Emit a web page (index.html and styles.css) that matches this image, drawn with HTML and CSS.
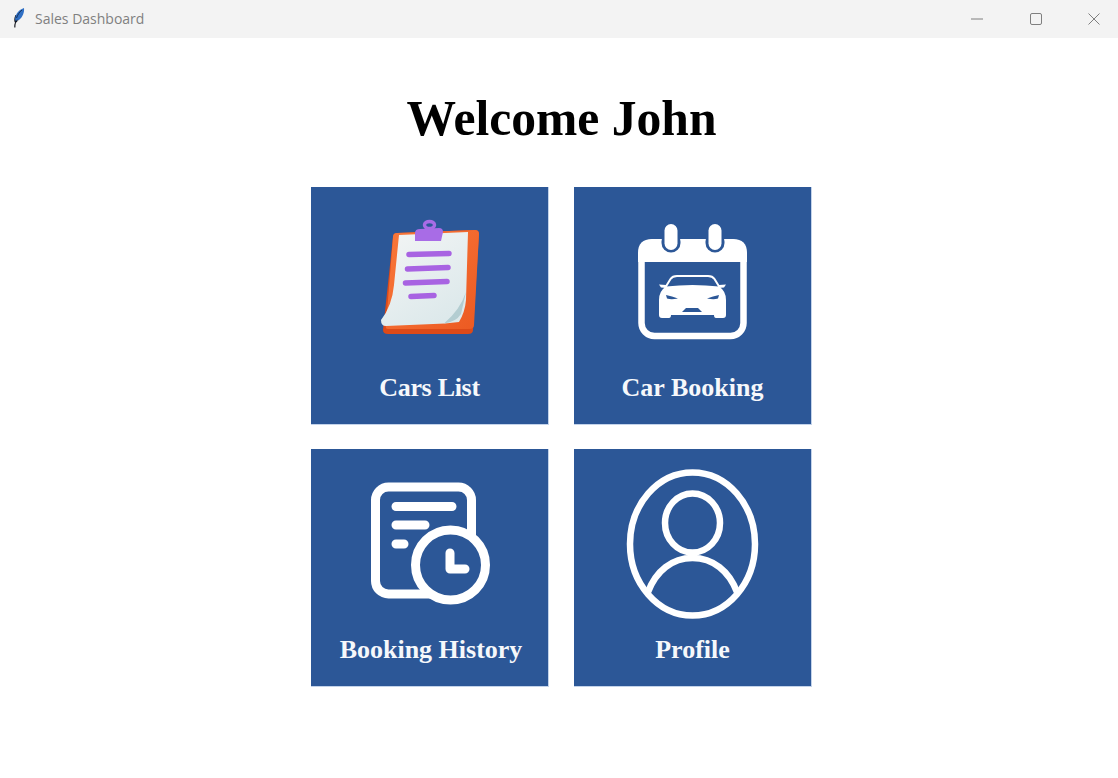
FILE: index.html
```html
<!DOCTYPE html>
<html lang="en">
<head>
<meta charset="utf-8">
<title>Sales Dashboard</title>
<link rel="stylesheet" href="styles.css">
</head>
<body>
<header class="titlebar">
  <div class="titlebar-left">
    <svg class="feather" viewBox="10 7 16 24" width="16" height="24">
      <path class="feather-black" d="M14.300 27.500 C14.200 25.500 14.400 24 15 22.500 C14 21.500 14 18 15.500 15 L20 15 L17 22 L16 22.500 C15.500 24 15.300 25.800 15.400 27.500 Z"/>
      <path class="feather-blue" d="M15.200 20 C14.800 15.500 18 10 24 8 C24.500 12 23 17 18.500 20.500 L17 19.500 L16 21.500 Z"/>
      <path class="feather-shine" d="M16.500 18 C17.500 15 19.500 12 22 10"/>
    </svg>
    <span class="window-title">Sales Dashboard</span>
  </div>
  <div class="window-controls">
    <svg class="ctrl" viewBox="0 0 12 12" width="12" height="12"><path d="M0 6H12"/></svg>
    <svg class="ctrl" viewBox="0 0 12 12" width="12" height="12"><rect x="0.500" y="0.500" width="11" height="11" rx="1.500"/></svg>
    <svg class="ctrl" viewBox="0 0 12 12" width="12" height="12"><path d="M0.500 0.500L11.500 11.500M11.500 0.500L0.500 11.500"/></svg>
  </div>
</header>
<main class="content">
  <h1 class="welcome">Welcome John</h1>
  <section class="tiles">
    <a class="tile">
      <svg class="tile-icon" viewBox="311 187 238 170">
        <defs>
          <linearGradient id="board" x1="0" y1="0" x2="1" y2="1">
            <stop offset="0" stop-color="#f9783a"/>
            <stop offset="1" stop-color="#ec5a22"/>
          </linearGradient>
          <linearGradient id="paper" x1="0" y1="0" x2="0.600" y2="1">
            <stop offset="0" stop-color="#f3f5f5"/>
            <stop offset="1" stop-color="#dde9eb"/>
          </linearGradient>
        </defs>
        <path d="M393 237 Q393 233 397 233 L475 230 Q479 230 479 234 L473 330 Q473 334 468 334 L388 334 Q383 334 383 330 Z" fill="#dd4a18"/>
        <path d="M393 237 Q393 233 397 233 L475 230 Q479 230 479 234 L474 325 Q474 329 469 329 L388 329 Q385 329 386 325 Z" fill="url(#board)"/>
        <path d="M399 235 L468 232 L466 300 Q465 312 459 322 L445 323.500 L386 326 Q381 326 381 320 Q392 306 394 285 Z" fill="url(#paper)"/>
        <path d="M466 292 Q460 310 444 323.500 Q456 322 461 314 Z" fill="#b3cdd1"/>
        <path d="M409 254.500L449 253.500M407.500 269L448 267.500M405.500 283L447 281.500M411 296.500L434 295.500" stroke="#a863e2" stroke-width="5.500" stroke-linecap="round" fill="none"/>
        <ellipse cx="429.500" cy="225" rx="5" ry="3.500" fill="none" stroke="#a86ce6" stroke-width="3.500"/>
        <path d="M415 233 Q415 229 420 229 L439 228 Q443 228 443 232 L441 241 L415 241 Z" fill="#a86ce6"/>
      </svg>
      <span class="tile-label label-tight">Cars List</span>
    </a>
    <a class="tile">
      <svg class="tile-icon" viewBox="574 187 238 170">
        <rect class="w-stroke" x="641.500" y="242.500" width="102" height="93.500" rx="13"/>
        <path d="M638 262 V253 Q638 239 652 239 H733 Q747 239 747 253 V262 Z" fill="#fff"/>
        <rect x="661.500" y="232" width="19" height="20.500" rx="9.500" fill="#2c5797"/>
        <rect x="705.500" y="232" width="19" height="20.500" rx="9.500" fill="#2c5797"/>
        <rect x="664.500" y="224" width="13" height="26" rx="6.500" fill="#fff"/>
        <rect x="708.500" y="224" width="13" height="26" rx="6.500" fill="#fff"/>
        <path d="M665 288 L670.500 279 Q672.500 276 677 276 H708 Q712.500 276 714.500 279 L720 288" fill="none" stroke="#fff" stroke-width="2"/>
        <path d="M659 284.500 L666 285 L667 288 L661 287.500 Z M726 284.500 L719 285 L718 288 L724 287.500 Z" fill="#fff"/>
        <path d="M666 286.500 Q692.500 283.500 719 286.500 Q726 291 726 300 V315 Q726 318 723 318 H716 Q714 318 714 315 H671 Q671 318 669 318 H662 Q659 318 659 315 V300 Q659 291 666 286.500 Z" fill="#fff"/>
        <path d="M666 295 Q672 296 678 298.500 Q671 300 667 298.500 Z M719 295 Q713 296 707 298.500 Q714 300 718 298.500 Z M682 312 L686 308 H698 L702 312 Z" fill="#2c5797"/>
      </svg>
      <span class="tile-label">Car Booking</span>
    </a>
    <a class="tile">
      <svg class="tile-icon" viewBox="311 449 238 170">
        <rect class="w-stroke thick" x="375.500" y="487" width="96" height="107" rx="13"/>
        <path d="M396 506.500H452M396 525H425M396 544H404" class="w-line"/>
        <circle cx="450.500" cy="565" r="35" fill="#2c5797" stroke="#fff" stroke-width="9"/>
        <path d="M450 553V569H465" class="w-line"/>
      </svg>
      <span class="tile-label label-shift">Booking History</span>
    </a>
    <a class="tile">
      <svg class="tile-icon" viewBox="574 449 238 170">
        <ellipse class="w-stroke" cx="692.500" cy="544" rx="62.500" ry="71.500"/>
        <ellipse class="w-stroke" cx="692.500" cy="523" rx="27.500" ry="29.500"/>
        <path class="w-stroke" d="M648 592 C656 571 672 558 692.500 558 C713 558 729 571 737 592"/>
      </svg>
      <span class="tile-label">Profile</span>
    </a>
  </section>
</main>
</body>
</html>
```
FILE: styles.css
```css
* {
  box-sizing: border-box;
}

html,
body {
  margin: 0;
  height: 100%;
  background: #fff;
}

body {
  display: flex;
  flex-direction: column;
  overflow: hidden;
}

.titlebar {
  height: 38px;
  flex: none;
  display: flex;
  justify-content: space-between;
  align-items: center;
  background: #f3f3f3;
}

.titlebar-left {
  display: flex;
  align-items: center;
  padding-left: 10px;
}

.feather {
  display: block;
}

.feather-black {
  fill: #10131a;
}

.feather-blue {
  fill: #2f6fc4;
}

.feather-shine {
  fill: none;
  stroke: #10233f;
  stroke-width: 0.800;
}

.window-title {
  margin: 0 0 2px 9px;
  font: 14px "Open Sans", sans-serif;
  color: #808080;
}

.window-controls {
  display: flex;
  gap: 46.500px;
  padding-right: 18px;
}

.ctrl {
  display: block;
  fill: none;
  stroke: #7f7f7f;
  stroke-width: 1;
}

.content {
  flex: 1;
  display: flex;
  flex-direction: column;
  align-items: center;
  padding-left: 5px;
}

.welcome {
  margin: 49px 0 37px;
  font: bold 49.600px/63px "Liberation Serif", serif;
  color: #000;
}

.tiles {
  display: grid;
  grid-template-columns: 238px 238px;
  grid-auto-rows: 238px;
  gap: 24px 25px;
}

.tile {
  display: flex;
  flex-direction: column;
  align-items: center;
  background: #2c5797;
  color: #f6f8fb;
  border-right: 1px solid #c3d3ea;
  border-bottom: 1px solid #c3d3ea;
}

.tile-icon {
  display: block;
  width: 238px;
  height: 170px;
  flex: none;
}

.tile-label {
  font: bold 26px/62px "Liberation Serif", serif;
  white-space: nowrap;
}

.label-shift {
  margin-left: 3px;
}

.label-tight {
  letter-spacing: -0.300px;
}

.w-stroke {
  fill: none;
  stroke: #fff;
  stroke-width: 6.500;
}

.w-stroke.thick {
  stroke-width: 9;
}

.w-line {
  fill: none;
  stroke: #fff;
  stroke-width: 9;
  stroke-linecap: round;
  stroke-linejoin: round;
}
```
